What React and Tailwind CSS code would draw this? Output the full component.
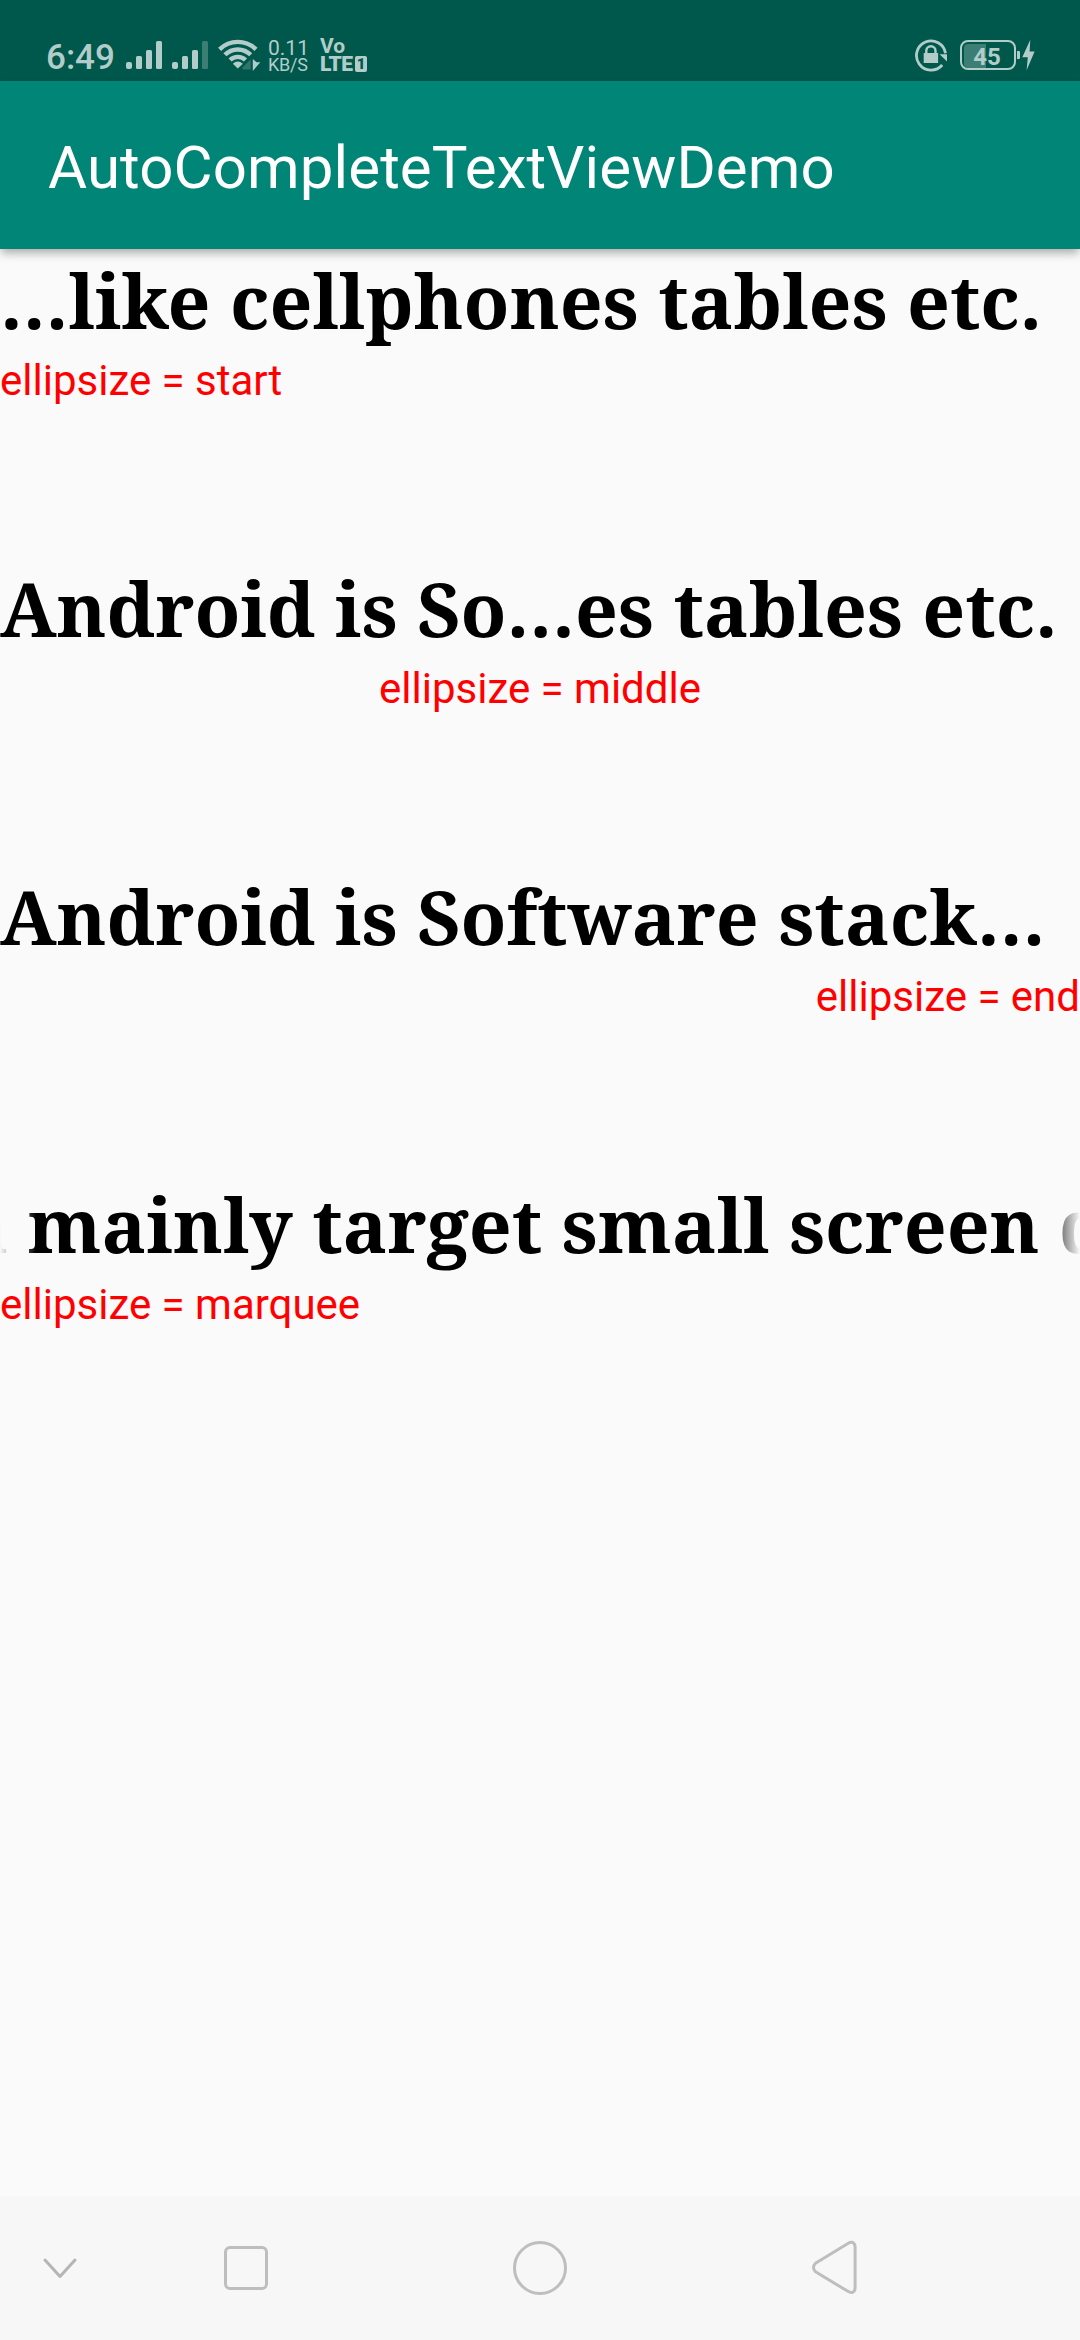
const SAMPLES = [
  { text: "…like cellphones tables etc.", label: "ellipsize = start", align: "text-left" },
  { text: "Android is So…es tables etc.", label: "ellipsize = middle", align: "text-center" },
  { text: "Android is Software stack…", label: "ellipsize = end", align: "text-right" },
  { text: "n mainly target small screen d", label: "ellipsize = marquee", align: "text-left", marquee: true },
];

function Signal({ weak }) {
  return (
    <svg width="36" height="28" viewBox="0 0 36 28" fill="#b2cdc9">
      <rect x="0" y="21" width="6" height="7" rx="2" />
      <rect x="10" y="15" width="6" height="13" rx="1.5" />
      <rect x="20" y="9" width="6" height="19" rx="1.5" />
      <rect x="30" y="0" width="6" height="28" rx="1.5" fill={weak ? "#3c7d74" : "#b2cdc9"} />
    </svg>
  );
}

function Wifi() {
  return (
    <svg width="44" height="32" viewBox="0 0 44 32" fill="none" stroke="#b2cdc9" strokeWidth="4.4">
      <path d="M1.6 10.4A25.8 25.8 0 0 1 38 10.4" />
      <path d="M6.9 15.8A18.2 18.2 0 0 1 32.7 15.8" />
      <path d="M12.1 21A11 11 0 0 1 27.5 21" />
      <path d="M14.8 24.8Q19.8 20.4 24.8 24.8L19.8 29.4Z" fill="#b2cdc9" stroke="none" />
      <path d="M24 31V28.5L33.2 19.3V31Z" fill="#2f756b" stroke="#00574b" strokeWidth="1" />
      <path d="M34.8 20V32L42.3 23.3H38.5Z" fill="#b2cdc9" stroke="none" />
    </svg>
  );
}

function RotationLock() {
  return (
    <svg width="34" height="34" viewBox="0 0 34 34" fill="none" stroke="#b2cdc9">
      <path d="M28.2 26A14.6 14.6 0 1 1 31.5 14.2" strokeWidth="2.8" />
      <path d="M25.6 15.2H33V22.6Z" fill="#b2cdc9" stroke="none" />
      <rect x="9.7" y="14" width="14.4" height="10" fill="#b2cdc9" stroke="none" />
      <path d="M12.3 14.5V11.8A4.6 4.6 0 0 1 21.5 11.8V14.5" strokeWidth="2.4" />
    </svg>
  );
}

function Battery() {
  return (
    <div className="flex items-center">
      <div className="grid h-[30px] w-14 grid-cols-1 rounded-[8px] border-[2.4px] border-[#b2cdc9] p-[2px]">
        <div className="col-start-1 row-start-1 w-[22px] rounded-l-[4px] bg-[#3c7d74]" />
        <div className="col-start-1 row-start-1 pt-[2px] pr-[2px] text-center text-[24px] leading-[22px] font-bold">45</div>
      </div>
      <div className="ml-px h-2 w-[3px] rounded-r-[1px] bg-[#b2cdc9]" />
      <svg className="ml-[2px]" width="14" height="32" viewBox="0 0 14 32" fill="#b2cdc9">
        <path d="M8.3 0.8L0.3 18.2H5.8L4.6 31.2L12.6 12.6H7.6Z" />
      </svg>
    </div>
  );
}

function StatusBar() {
  return (
    <div className="flex h-[81px] items-start bg-[#00574b] text-[#b2cdc9]">
      <div className="mt-[37px] ml-[46px] w-[70px] text-[35px] leading-[41px] font-medium">6:49</div>
      <div className="mt-[41px] ml-[10px] flex gap-[10px]">
        <Signal />
        <Signal weak />
      </div>
      <div className="mt-[39px] ml-[10px]">
        <Wifi />
      </div>
      <div className="mt-[39px] ml-[5px] w-[42px] pl-px">
        <div className="text-[21px] leading-[18px]">0.11</div>
        <div className="text-[18px] leading-[15px] tracking-[-0.2px]">KB/S</div>
      </div>
      <div className="mt-[38px] ml-[11px] w-[48px]">
        <div className="text-[21px] leading-[17px] font-bold">Vo</div>
        <div className="flex items-center">
          <div className="w-[35px] text-[21px] leading-[18px] font-black tracking-[-0.7px]">LTE</div>
          <div className="h-4 w-3 rounded-[2px] bg-[#b2cdc9] text-center text-[15px] leading-4 font-black text-[#00574b]">1</div>
        </div>
      </div>
      <div className="mt-[39px] ml-auto">
        <RotationLock />
      </div>
      <div className="mt-[39px] mr-[44px] ml-[12px]">
        <Battery />
      </div>
    </div>
  );
}

function Sample({ text, label, align, marquee }) {
  return (
    <section className="h-[308px]">
      <div
        className={
          "h-[102px] overflow-hidden font-['Noto_Serif',serif] text-[75px] leading-[102px] font-bold whitespace-nowrap text-black " +
          (marquee ? "mask-[linear-gradient(to_right,transparent,black_36px,black_calc(100%-36px),transparent)]" : "")
        }
      >
        <div className={marquee ? "-ml-[42px]" : ""}>{text}</div>
      </div>
      <div className={"pt-px text-[42px] leading-[57px] text-[#ff0000] " + align}>{label}</div>
    </section>
  );
}

function NavBar() {
  return (
    <nav className="flex h-36 items-center bg-[#f7f7f7]">
      <svg className="ml-[42px]" width="36" height="60" viewBox="0 0 36 60" fill="none" stroke="#b5b5b5" strokeWidth="3" strokeLinecap="round" strokeLinejoin="round">
        <path d="M3 22L18 38.5L33 22" />
      </svg>
      <div className="ml-[146px] h-11 w-11 rounded-[6px] border-3 border-[#bebebe]" />
      <div className="ml-[245px] h-[54px] w-[54px] rounded-full border-3 border-[#bebebe]" />
      <svg className="ml-[244px]" width="48" height="60" viewBox="0 0 48 60" fill="none" stroke="#bebebe" strokeWidth="3" strokeLinejoin="round">
        <path d="M4.5 25.2L37.3 5.2Q39.2 4 41.5 4.3Q44.1 5.3 44.1 9V49.8Q44.1 53.3 41.5 54.4Q39.2 54.8 37.3 53.6L4.5 33.8Q2.5 31.8 2.5 29.5Q2.5 27.2 4.5 25.2Z" />
      </svg>
    </nav>
  );
}

export default function App() {
  return (
    <div className="flex h-[2340px] w-[1080px] flex-col overflow-hidden bg-[#fafafa] font-[Roboto,sans-serif]">
      <StatusBar />
      <header className="z-10 flex h-42 items-center bg-[#008577] pt-[5px] pl-12 text-[60px] leading-[70px] tracking-[0.1px] text-white shadow-[0_5px_9px_-1px_rgba(0,0,0,0.32)]">
        AutoCompleteTextViewDemo
      </header>
      <main className="flex-1">
        {SAMPLES.map((s) => (
          <Sample key={s.label} {...s} />
        ))}
      </main>
      <NavBar />
    </div>
  );
}
